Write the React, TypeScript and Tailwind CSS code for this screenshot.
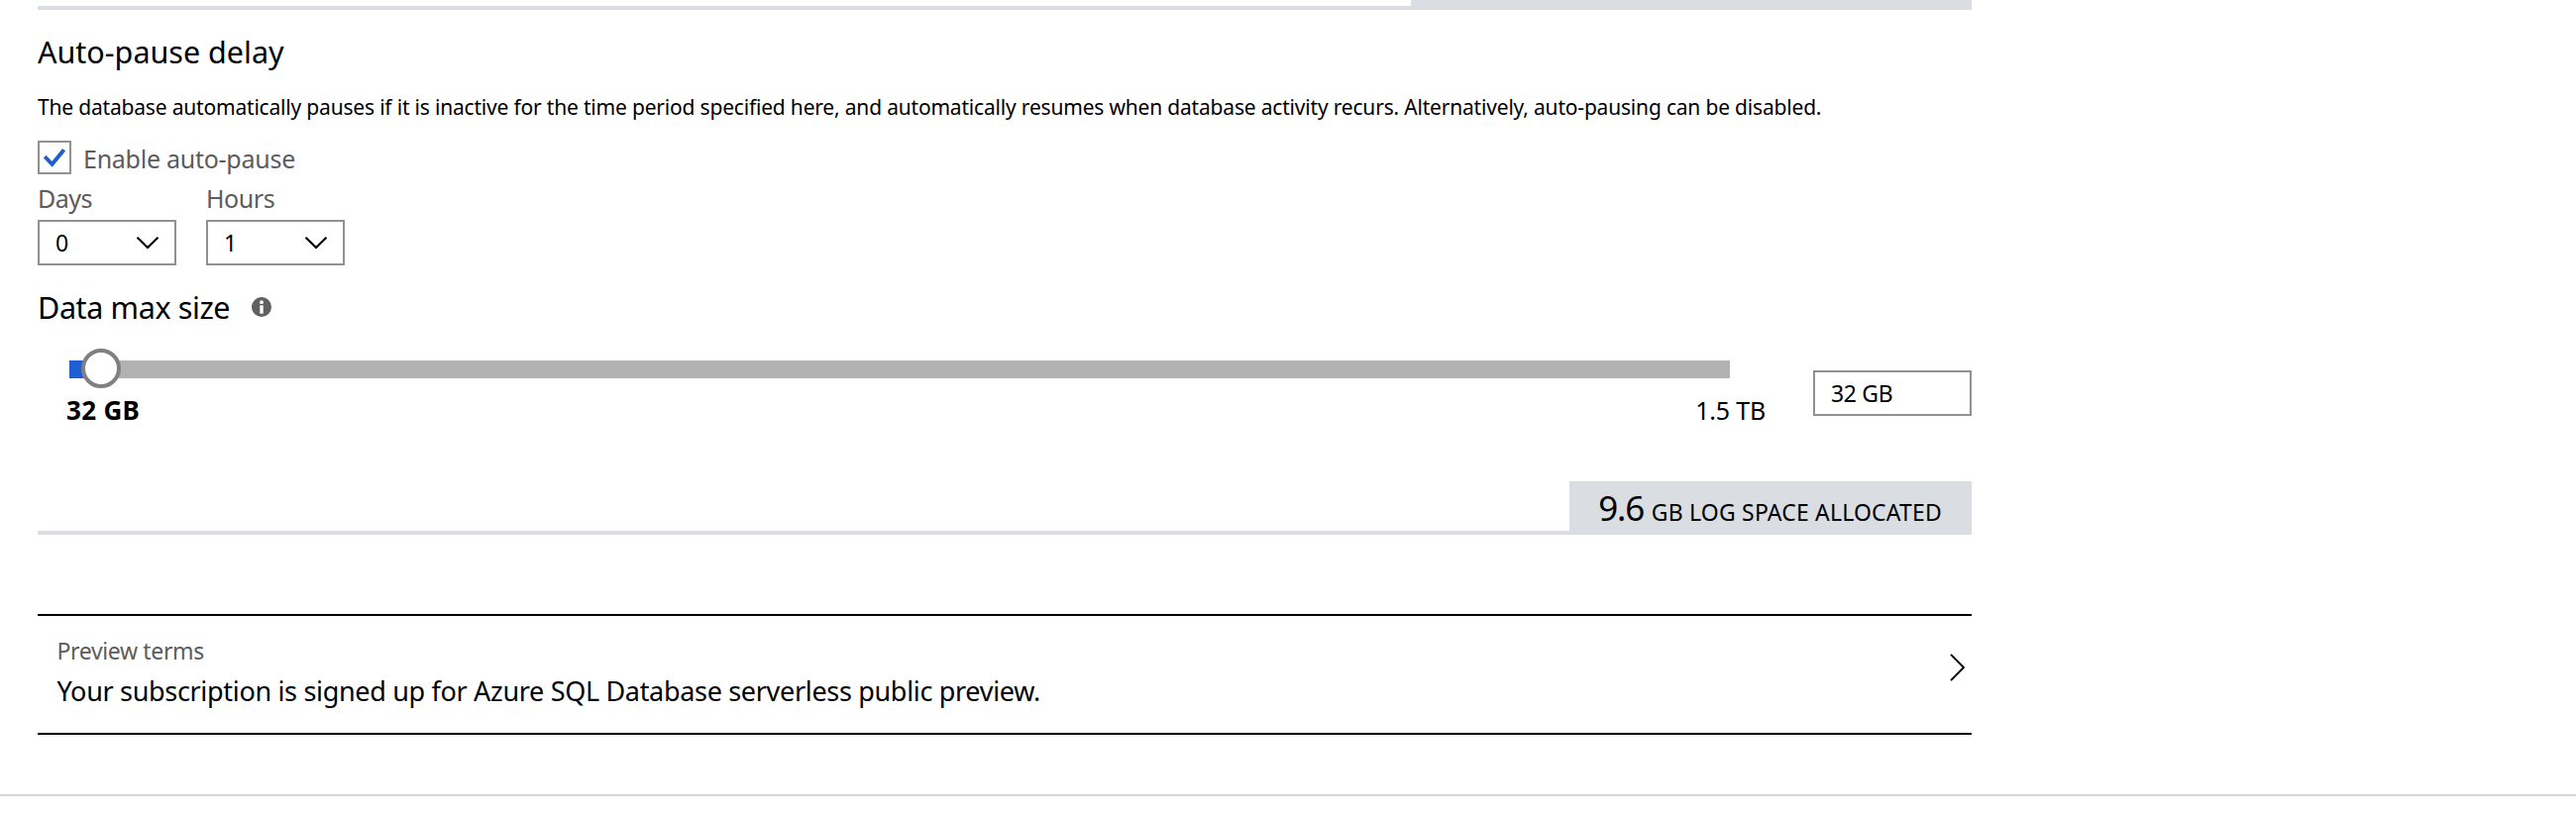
function SelectBox({ label, value, labelClass, valueClass }: { label: string; value: string; labelClass: string; valueClass: string }) {
  return (
    <div className="w-[140px]">
      <div className={`h-[30px] text-[25px] leading-[30px] text-[#5c5c5c] ${labelClass}`}>{label}</div>
      <div className={`mt-[7px] flex h-[46px] items-center justify-between border-2 border-[#919191] pr-[15px] text-[23px] leading-[42px] ${valueClass}`}>
        <span>{value}</span>
        <svg width="24" height="16" viewBox="0 0 24 16" fill="none" stroke="#000" strokeWidth="2.2">
          <path d="M1.5 2.8 L12 13 L22.5 2.8" />
        </svg>
      </div>
    </div>
  );
}

export default function App() {
  return (
    <div className="h-[824px] w-[2600px] overflow-hidden bg-white font-['Noto_Sans','Open_Sans',sans-serif] text-black">
      <div className="ml-[38px] w-[1952px] whitespace-nowrap">
        <div className="flex h-[10px] items-end">
          <div className="h-[4px] flex-1 bg-[#dadde2]" />
          <div className="h-[10px] w-[566px] bg-[#dadde2]" />
        </div>

        <h2 className="mt-[22px] h-[40px] text-[30.5px] leading-[40px]">Auto-pause delay</h2>
        <p className="mt-[21px] h-[30px] text-[21px] leading-[30px] tracking-[-0.187px]">
          The database automatically pauses if it is inactive for the time period specified here, and automatically resumes when database activity recurs. Alternatively, auto-pausing can be disabled.
        </p>

        <div className="mt-[19px] flex h-[34px]">
          <div className="flex h-[34px] w-[34px] items-center justify-center border-2 border-[#919191]">
            <svg width="30" height="30" viewBox="0 0 30 30" fill="none" stroke="#1f5fd3" strokeWidth="3.9">
              <path d="M5.2 14.2 L12.6 21.8 L24.6 7.2" />
            </svg>
          </div>
          <span className="ml-[12px] pt-px text-[25px] leading-[34px] tracking-[-0.26px] text-[#5c5c5c]">Enable auto-pause</span>
        </div>

        <div className="mt-[9px] flex gap-[30px]">
          <SelectBox label="Days" value="0" labelClass="tracking-[-0.55px]" valueClass="pl-[16px]" />
          <SelectBox label="Hours" value="1" labelClass="tracking-[-0.45px]" valueClass="pl-[16px]" />
        </div>

        <div className="mt-[22px] flex h-[40px] items-center">
          <h2 className="w-[216px] text-[30.5px] leading-[40px] tracking-[-0.38px]">Data max size</h2>
          <svg width="20" height="20" viewBox="0 0 20 20">
            <circle cx="10" cy="10" r="10" fill="#606060" />
            <circle cx="10" cy="5.2" r="1.9" fill="#fff" />
            <rect x="8.3" y="8.3" width="3.4" height="8.4" fill="#fff" />
          </svg>
        </div>

        <div className="mt-[22px] flex h-[80px] justify-between">
          <div className="ml-[29px] w-[1715px]">
            <div className="relative ml-[3px] flex h-[40px] w-[1676px] items-start pt-[12px]">
              <div className="h-[18px] w-[32px] bg-[#1f5fd3]" />
              <div className="h-[18px] flex-1 bg-[#b2b2b2]" />
              <div className="absolute top-0 left-[12px] h-[40px] w-[40px] rounded-full border-4 border-[#808080] bg-white" />
            </div>
            <div className="mt-[4px] flex justify-between leading-[36px]">
              <span className="text-[26px] font-bold tracking-[0.3px]">32 GB</span>
              <span className="text-[25px] tracking-[-0.2px]">1.5 TB</span>
            </div>
          </div>
          <div className="mt-[22px] h-[46px] w-[160px] border-2 border-[#919191] pl-[16px] text-[23px] leading-[42px] tracking-[-0.35px]">32 GB</div>
        </div>

        <div className="mt-[54px] flex h-[54px] items-end">
          <div className="h-[4px] flex-1 bg-[#dadde2]" />
          <div className="flex h-[54px] w-[406px] items-baseline justify-end bg-[#dadde2] pr-[30px] leading-[54px]">
            <span className="text-[35px] tracking-[-1.3px]">9.6</span>
            <span className="ml-[8px] text-[23px] tracking-[0.18px]">GB LOG SPACE ALLOCATED</span>
          </div>
        </div>

        <div className="mt-[80px] flex h-[122px] justify-between border-y-2 border-black pr-[6px] pl-[19.5px]">
          <div className="pt-[19px]">
            <div className="text-[23px] leading-[32px] tracking-[-0.35px] text-[#5c5c5c]">Preview terms</div>
            <div className="mt-[7px] text-[27px] leading-[36px] tracking-[-0.32px]">
              Your subscription is signed up for Azure SQL Database serverless public preview.
            </div>
          </div>
          <svg className="mt-[36px]" width="16" height="32" viewBox="0 0 16 32" fill="none" stroke="#000" strokeWidth="1.9">
            <path d="M1 2.8 L14 16 L1 29.2" />
          </svg>
        </div>
      </div>
      <div className="mt-[60px] h-[2px] bg-[#d6d6d6]" />
    </div>
  );
}
